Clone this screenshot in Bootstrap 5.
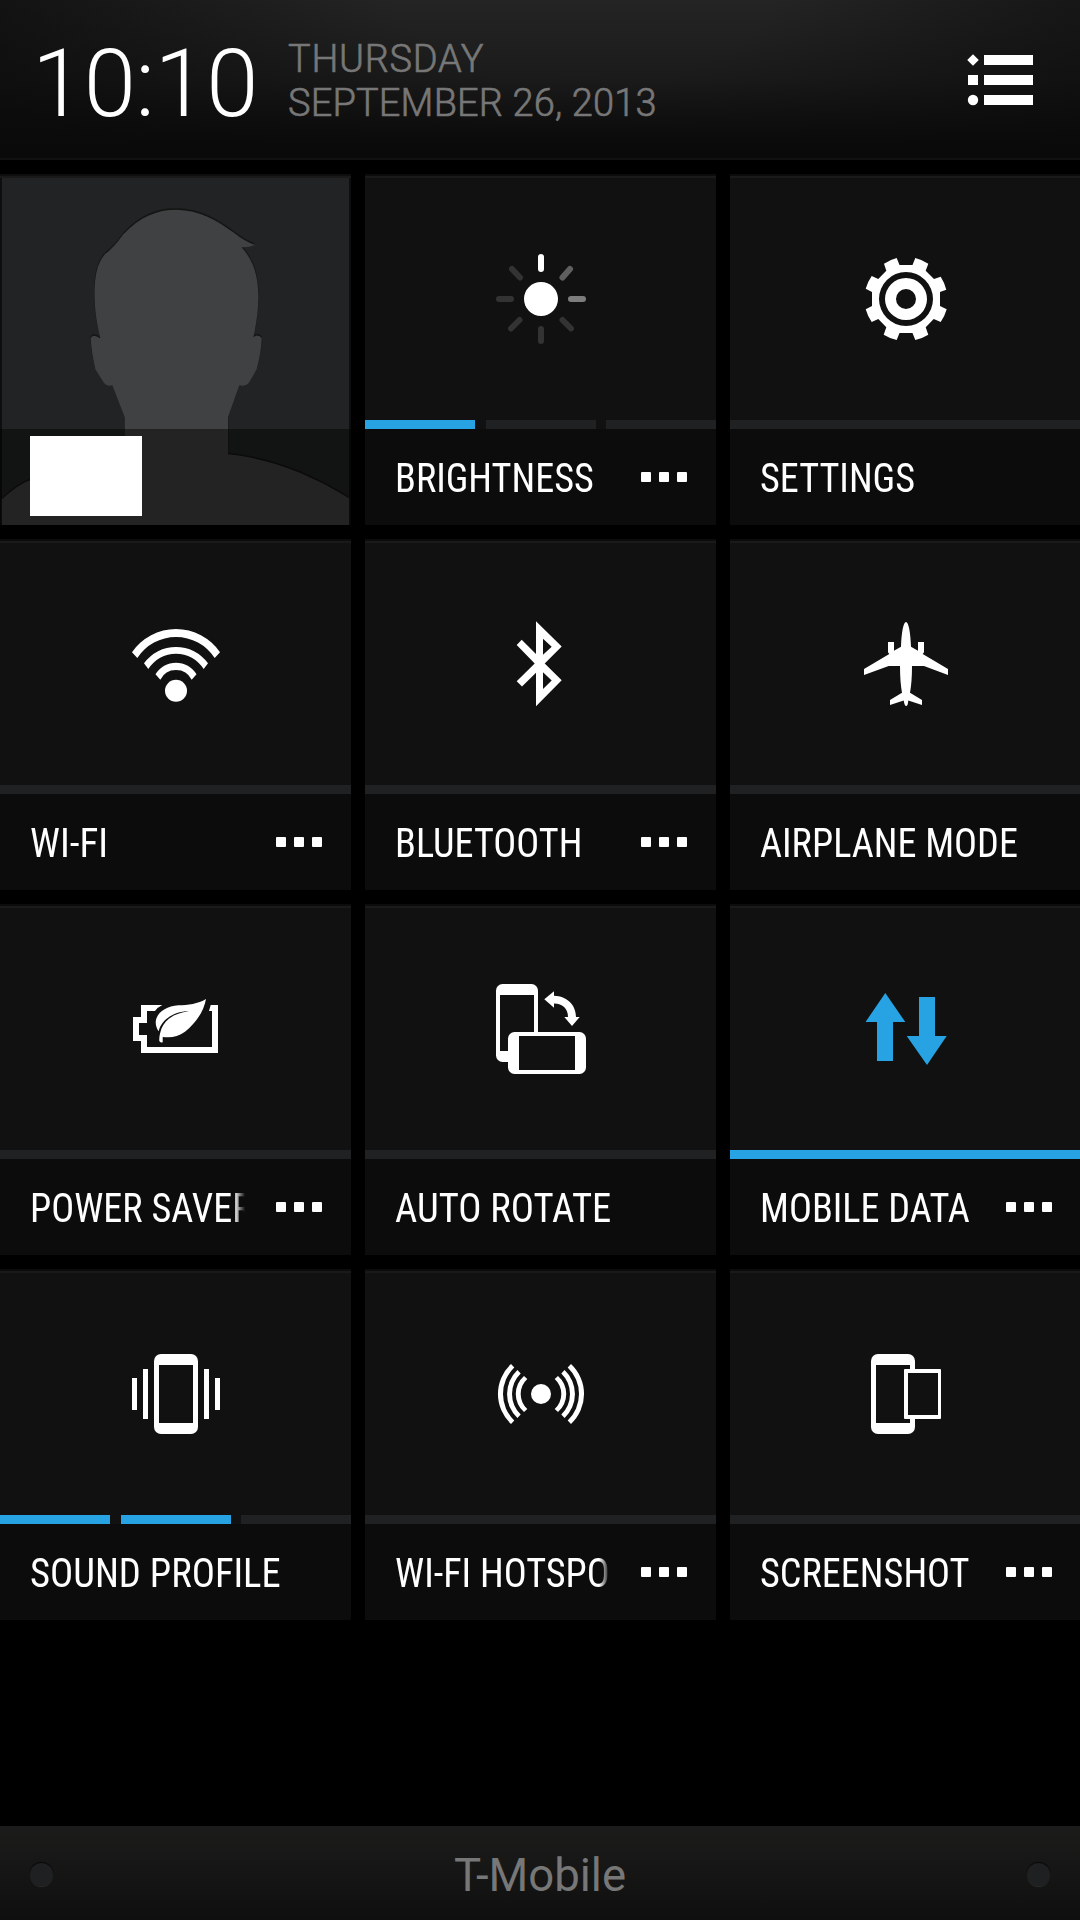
<!DOCTYPE html>
<html lang="en">
<head>
<meta charset="utf-8">
<meta name="viewport" content="width=device-width, initial-scale=1">
<title>Quick Settings</title>
<link href="https://cdn.jsdelivr.net/npm/bootstrap@5.3.0/dist/css/bootstrap.min.css" rel="stylesheet">
<style>
body{background:#000;font-family:"Roboto Condensed",Roboto,sans-serif;width:1080px;height:1920px;overflow:hidden}
.topbar{height:160px;border-bottom:2px solid #111;background:linear-gradient(180deg,rgba(10,10,10,0) 0,rgba(10,10,10,.35) 50%,#0a0a0a 92%),radial-gradient(ellipse 620px 260px at 54% 0,#242424 30%,#111 100%)}
.clock{font:300 94px/1 Roboto,sans-serif;letter-spacing:-.5px;width:288px;padding:9px 0 0 32px;color:#fff}
.today{font:300 38px/44px Roboto,sans-serif;letter-spacing:.15px;color:#777;-webkit-text-stroke:.65px #777;padding-top:4px}
.weekday{letter-spacing:.7px}
.menu-icon{margin:2px 47px 0 0}
.tiles{display:grid;grid-template-columns:repeat(3,351px);gap:14px;margin-top:14px}
.tile{height:351px;background:#111;border-top:2px solid #0c0c0c;border-radius:0}
.tile-icon{height:244px;border-top:2px solid #1a1a1a;fill:#fff}
.meter{height:9px}
.meter i{flex:1;background:#202122}
.meter.steps i{flex:0 0 110px}
.meter i.on{background:#27a2e2}
.caption-row{height:96px;background:#0c0c0c;padding:0 29px 0 30px}
.caption-text{font-size:41px;line-height:48px;white-space:nowrap;overflow:hidden;margin-top:2px;flex:1}
.caption-text span{display:inline-block;transform-origin:0 50%;transform:scaleX(.933)}
.caption-text .loose{transform:scaleX(.942)}
.caption-text .short{transform:scaleX(.957)}
.has-more .caption-text{flex:0 0 215px}
.fade-end{-webkit-mask-image:linear-gradient(90deg,#000 95%,transparent);mask-image:linear-gradient(90deg,#000 95%,transparent)}
.more{gap:8px}
.more b{width:10px;height:10px;border-radius:1px;background:#fff}
.portrait{position:relative}
.portrait svg{margin-top:-2px}
.name-block{position:absolute;left:30px;top:260px;width:112px;height:80px}
.carrier{height:94px;background:linear-gradient(#1c1c1b,#0f0f0f);color:#777;font:400 45.500px/1 Roboto,sans-serif;padding:2px 30px 0}
.carrier span{padding-top:4px}
.screw{width:23px;height:23px;background:#1f2021;box-shadow:0 -1px 1px #080808,0 1px 1px #2a2a2a}
</style>
</head>
<body class="d-flex flex-column">
<header class="topbar d-flex align-items-center flex-shrink-0">
  <div class="clock">10:10</div>
  <div class="today"><span class="weekday">THURSDAY</span><br><span>SEPTEMBER 26, 2013</span></div>
  <svg class="menu-icon ms-auto" width="66" height="52" viewBox="967 54 66 52" fill="#fff"><path d="M984 55h49v10h-49zM984 75h49v10h-49zM984 95h49v10h-49zM968 75h10v10h-10zM973 54.200l5.800 5.800l-5.800 5.800l-5.800-5.800z"/><circle cx="973" cy="100" r="5.200"/></svg>
</header>
<main class="tiles">
  <section class="tile card border-bottom-0 border-start-0 border-end-0 portrait">
    <svg width="351" height="351" viewBox="0 27 1053 1053">
      <rect x="0" y="27" width="1053" height="1053" fill="#0e0e0e"/><rect x="0" y="33" width="1053" height="6" fill="#191919"/>
      <rect x="6" y="39" width="1041" height="1041" fill="#222324"/>
      <defs><path id="bust" d="M6 1003Q50 960 93 944C180 900 260 880 374 868L374 757L337 661Q322 666 312 654L286 613Q274 560 272 520Q276 508 292 515L301 520C285 455 281 400 285 350Q290 295 315 267Q340 250 370 208C420 155 470 134 530 134C600 136 650 165 700 202Q735 230 765 240Q745 248 725 247C760 285 776 335 775 400Q775 450 760 517Q775 505 785 519Q784 560 770 613Q755 640 746 654Q736 666 718 661L684 757L684 868C800 880 920 920 1047 1000L1047 1080L6 1080Z"/></defs>
      <use href="#bust" y="-4" fill="#111" stroke="#191a1a" stroke-width="3"/>
      <use href="#bust" fill="#404143"/>
      <rect x="0" y="792" width="1053" height="288" fill="#000" fill-opacity=".45"/>
    </svg>
    <div class="name-block bg-white"></div>
  </section>

  <section class="tile card border-bottom-0 border-start-0 border-end-0 has-more">
    <div class="tile-icon d-flex align-items-center justify-content-center"><svg width="121" height="120" viewBox="-61 -60 121 120"><circle r="17"/><g stroke-width="6" stroke-linecap="round" stroke="#333"><path stroke="#fff" d="M0-30V-42"/><path stroke="#5f5f5f" d="M21.500-21.500L29-30"/><path stroke="#7d7d7d" d="M30 0H42"/><path d="M21.500 21L30 29.500M0 30V42M-21.500 21L-30 29.500M-30 0H-42M-21-21.500L-29-30"/></g></svg></div>
    <div class="meter steps d-flex justify-content-between"><i class="on"></i><i></i><i></i></div>
    <div class="caption-row d-flex align-items-center justify-content-between text-white"><div class="caption-text"><span>BRIGHTNESS</span></div><div class="more d-flex"><b></b><b></b><b></b></div></div>
  </section>

  <section class="tile card border-bottom-0 border-start-0 border-end-0">
    <div class="tile-icon d-flex align-items-center justify-content-center"><svg width="121" height="120" viewBox="-61 -60 121 120"><path fill-rule="evenodd" d="M-6.500-34L-9.300-41A42 42 0 0 0-22-35.300L-19.700-28.300L-27.700-20L-34.300-23A42 42 0 0 0-40.300-10.300L-34-7V7L-40.300 10.300A42 42 0 0 0-34.300 23L-27.700 20L-19.700 28.300L-22.300 35.700A42 42 0 0 0-9.300 41L-6.500 34H6.500L9.300 41A42 42 0 0 0 22.300 35.700L19.700 28.300L27.700 20L34.700 23A42 42 0 0 0 40.700 10.300L34 7V-7L40.300-9.300A42 42 0 0 0 34.700-22.300L28-20L19.700-28.300L22.300-35.300A42 42 0 0 0 9.300-41L6.500-34ZM-27 0a27 27 0 1 0 54 0a27 27 0 1 0-54 0ZM-21 0a21 21 0 1 0 42 0a21 21 0 1 0-42 0ZM-10 0a10 10 0 1 0 20 0a10 10 0 1 0-20 0Z"/></svg></div>
    <div class="meter d-flex"><i></i></div>
    <div class="caption-row d-flex align-items-center text-white"><div class="caption-text"><span>SETTINGS</span></div></div>
  </section>

  <section class="tile card border-bottom-0 border-start-0 border-end-0 has-more">
    <div class="tile-icon d-flex align-items-center justify-content-center"><svg width="121" height="120" viewBox="-61 -60 121 120"><circle cy="26.700" r="11"/><path d="M-44-11.700A53.200 53.200 0 0 1 44-11.700L38.700-6A46.200 46.200 0 0 0-38.700-6ZM-32-.7A39.600 39.600 0 0 1 32-.7L27.700 5A32.700 32.700 0 0 0-27.700 5ZM-20.500 10.300A23.900 23.900 0 0 1 20.500 10.300L15.700 15.700A17.500 17.500 0 0 0-15.700 15.700Z"/></svg></div>
    <div class="meter d-flex"><i></i></div>
    <div class="caption-row d-flex align-items-center justify-content-between text-white"><div class="caption-text"><span class="short">WI-FI</span></div><div class="more d-flex"><b></b><b></b><b></b></div></div>
  </section>

  <section class="tile card border-bottom-0 border-start-0 border-end-0 has-more">
    <div class="tile-icon d-flex align-items-center justify-content-center"><svg width="121" height="120" viewBox="-61 -60 121 120"><path fill-rule="evenodd" d="M-5-42.700L20.700-17.500L3.700-.5L20.700 16.300L-5 42.200V8.700L-19 22.500L-24.300 17.300L-6.300-.5L-24.300-19L-19.300-24.300L-5-10ZM2-25.300V-9.300L10.700-17.300ZM2 8.300V25L10.700 16.500Z"/></svg></div>
    <div class="meter d-flex"><i></i></div>
    <div class="caption-row d-flex align-items-center justify-content-between text-white"><div class="caption-text"><span>BLUETOOTH</span></div><div class="more d-flex"><b></b><b></b><b></b></div></div>
  </section>

  <section class="tile card border-bottom-0 border-start-0 border-end-0">
    <div class="tile-icon d-flex align-items-center justify-content-center"><svg width="121" height="120" viewBox="-61 -60 121 120"><path d="M0-42C-2.500-42-4.500-32-5-17.300L-12-13.300V-22H-18V-11.700L-16.700-10L-42 5V11L-17.300 2H-6Q-6 18-4 28.700L-16 36V41L-2.300 36.500Q-1.500 42 .3 42Q1.800 42 2.300 36.500L16 41V36L4 28.700Q6 18 6 2H18L42 11V5L16.700-10L18-11.700V-22H12V-13.300L5-17.300C4.500-32 2.500-42 0-42Z"/></svg></div>
    <div class="meter d-flex"><i></i></div>
    <div class="caption-row d-flex align-items-center text-white"><div class="caption-text"><span>AIRPLANE MODE</span></div></div>
  </section>

  <section class="tile card border-bottom-0 border-start-0 border-end-0 has-more">
    <div class="tile-icon d-flex align-items-center justify-content-center"><svg width="121" height="120" viewBox="-61 -60 121 120"><path d="M-13.700-24H-35V-12H-43V12H-35V24H42V-24H34.700L33-18H36V18H-29V6H-37V-6H-29V-18H-21Q-18-22-13.700-24Z"/><path d="M30-30C22-25 12-24 2.300-23.700C-10-23-20-16-20.300-6.700C-20.300-3-19 0-17.300 2.300C-15-9-2-18 13-17.700C-2-16-11-9-14.500-.5C-16 4-17 8-16.700 12Q-16 14-13.300 13.300L-13.300 8C-5 9 2 8 9 2.700C20-6 28-18 30-30Z"/></svg></div>
    <div class="meter d-flex"><i></i></div>
    <div class="caption-row d-flex align-items-center justify-content-between text-white"><div class="caption-text fade-end"><span>POWER SAVER</span></div><div class="more d-flex"><b></b><b></b><b></b></div></div>
  </section>

  <section class="tile card border-bottom-0 border-start-0 border-end-0">
    <div class="tile-icon d-flex align-items-center justify-content-center"><svg width="121" height="120" viewBox="-61 -60 121 120"><rect x="-45" y="-45" width="42" height="78" rx="6.500"/><path fill="#111" d="M-41-34H-7V22H-41z"/><rect x="-33" y="3" width="78" height="42" rx="6.500"/><path fill="#111" d="M-22 7H34V41H-22z"/><path d="M3.300-29.700L13-37.700V-33.300C26-33 35-24 35-12H38.700L31-3L23.300-12H27C27-20 22-25.500 13-25.500V-21.300Z"/></svg></div>
    <div class="meter d-flex"><i></i></div>
    <div class="caption-row d-flex align-items-center text-white"><div class="caption-text"><span class="loose">AUTO ROTATE</span></div></div>
  </section>

  <section class="tile card border-bottom-0 border-start-0 border-end-0 has-more">
    <div class="tile-icon d-flex align-items-center justify-content-center"><svg width="121" height="120" viewBox="-61 -60 121 120" fill="#27a2e2"><path d="M-20.700-36L-.7-7H-13V32H-29V-7H-40.500ZM13-32H29V7H40.700L21 36L.7 7H13Z"/></svg></div>
    <div class="meter d-flex"><i class="on"></i></div>
    <div class="caption-row d-flex align-items-center justify-content-between text-white"><div class="caption-text"><span>MOBILE DATA</span></div><div class="more d-flex"><b></b><b></b><b></b></div></div>
  </section>

  <section class="tile card border-bottom-0 border-start-0 border-end-0">
    <div class="tile-icon d-flex align-items-center justify-content-center"><svg width="121" height="120" viewBox="-61 -60 121 120"><rect x="-22" y="-40" width="44" height="80" rx="7"/><path fill="#111" d="M-17-29H17V29H-17z"/><path d="M-33-25h5v50h-5zM28-25h5v50h-5zM-44-16h5v32h-5zM39-16h5v32h-5z"/></svg></div>
    <div class="meter steps d-flex justify-content-between"><i class="on"></i><i class="on"></i><i></i></div>
    <div class="caption-row d-flex align-items-center text-white"><div class="caption-text"><span class="loose">SOUND PROFILE</span></div></div>
  </section>

  <section class="tile card border-bottom-0 border-start-0 border-end-0 has-more">
    <div class="tile-icon d-flex align-items-center justify-content-center"><svg width="121" height="120" viewBox="-61 -60 121 120"><defs><path id="waves" d="M30-30A41 41 0 0 1 30 30L26.700 26.500A36.700 36.700 0 0 0 26.700-26.500ZM23.600-24A33 33 0 0 1 23.600 24L20.300 20.500A28.500 28.500 0 0 0 20.300-20.500ZM17-18A23.800 23.800 0 0 1 17 18L13.700 15A20.300 20.300 0 0 0 13.700-15Z"/></defs><circle r="10"/><use href="#waves"/><use href="#waves" transform="scale(-1 1)"/></svg></div>
    <div class="meter d-flex"><i></i></div>
    <div class="caption-row d-flex align-items-center justify-content-between text-white"><div class="caption-text fade-end"><span>WI-FI HOTSPO</span></div><div class="more d-flex"><b></b><b></b><b></b></div></div>
  </section>

  <section class="tile card border-bottom-0 border-start-0 border-end-0 has-more">
    <div class="tile-icon d-flex align-items-center justify-content-center"><svg width="121" height="120" viewBox="-61 -60 121 120"><rect x="-35" y="-40" width="44" height="80" rx="7"/><path fill="#111" d="M-30-29H4V29H-30z"/><rect x="-2" y="-25" width="37" height="50" rx="1"/><path fill="#111" d="M2-21H32V21H2z"/></svg></div>
    <div class="meter d-flex"><i></i></div>
    <div class="caption-row d-flex align-items-center justify-content-between text-white"><div class="caption-text"><span>SCREENSHOT</span></div><div class="more d-flex"><b></b><b></b><b></b></div></div>
  </section>
</main>
<footer class="carrier d-flex align-items-center justify-content-between mt-auto flex-shrink-0">
  <i class="screw rounded-circle"></i><span>T-Mobile</span><i class="screw rounded-circle"></i>
</footer>
<script src="https://cdn.jsdelivr.net/npm/bootstrap@5.3.0/dist/js/bootstrap.bundle.min.js"></script>
</body>
</html>
